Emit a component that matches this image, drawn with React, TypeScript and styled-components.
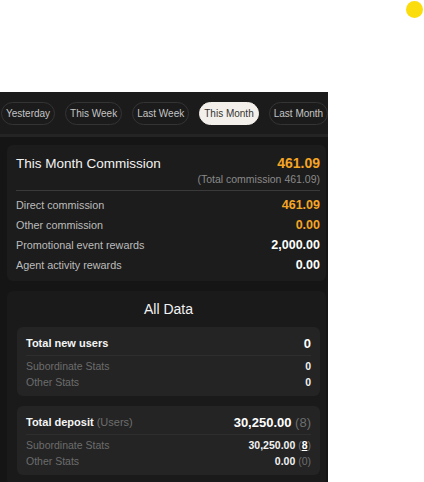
import React from "react";
import styled, { createGlobalStyle } from "styled-components";

const GlobalStyle = createGlobalStyle`
  html, body {
    margin: 0;
    padding: 0;
    background: #ffffff;
    font-family: "Liberation Sans", Arial, sans-serif;
  }
`;

const tabs = ["Yesterday", "This Week", "Last Week", "This Month", "Last Month"];

const commissionRows = [
  { label: "Direct commission", value: "461.09", accent: true },
  { label: "Other commission", value: "0.00", accent: true },
  { label: "Promotional event rewards", value: "2,000.00", accent: false },
  { label: "Agent activity rewards", value: "0.00", accent: false },
];

export default function App() {
  const [active, setActive] = React.useState("This Month");

  return (
    <Page>
      <GlobalStyle />
      <Dot />
      <Panel>
        <TabBar>
          {tabs.map((tab) => (
            <Tab key={tab} $active={tab === active} onClick={() => setActive(tab)}>
              {tab}
            </Tab>
          ))}
        </TabBar>
        <Content>
          <Card>
            <Head>
              <Title>This Month Commission</Title>
              <HeadRight>
                <BigValue>461.09</BigValue>
                <Note>(Total commission 461.09)</Note>
              </HeadRight>
            </Head>
            <Rows>
              {commissionRows.map((row) => (
                <Row key={row.label}>
                  <Label>{row.label}</Label>
                  <Value $accent={row.accent}>{row.value}</Value>
                </Row>
              ))}
            </Rows>
          </Card>
          <DataCard>
            <DataTitle>All Data</DataTitle>
            <SubCard>
              <SubHead>
                <SubTitle>Total new users</SubTitle>
                <SubValue>0</SubValue>
              </SubHead>
              <StatRow>
                <StatLabel>Subordinate Stats</StatLabel>
                <StatValue>0</StatValue>
              </StatRow>
              <StatRow>
                <StatLabel>Other Stats</StatLabel>
                <StatValue>0</StatValue>
              </StatRow>
            </SubCard>
            <SubCard>
              <SubHead>
                <SubTitle>
                  Total deposit <Muted>(Users)</Muted>
                </SubTitle>
                <SubValue>
                  30,250.00 <Muted>(8)</Muted>
                </SubValue>
              </SubHead>
              <StatRow>
                <StatLabel>Subordinate Stats</StatLabel>
                <StatValue>
                  30,250.00 <Muted>(</Muted><Under>8</Under><Muted>)</Muted>
                </StatValue>
              </StatRow>
              <StatRow>
                <StatLabel>Other Stats</StatLabel>
                <StatValue>
                  0.00 <Muted>(0)</Muted>
                </StatValue>
              </StatRow>
            </SubCard>
          </DataCard>
        </Content>
      </Panel>
    </Page>
  );
}

const Page = styled.div`
  position: relative;
  width: 424px;
  height: 482px;
  overflow: hidden;
  padding-top: 92px;
  box-sizing: border-box;
`;

const Dot = styled.div`
  position: absolute;
  top: 1px;
  right: 1px;
  width: 17px;
  height: 17px;
  border-radius: 50%;
  background: #fbdc0c;
`;

const Panel = styled.div`
  width: 328px;
  height: 390px;
  background: #151515;
  overflow: hidden;
`;

const TabBar = styled.div`
  display: flex;
  gap: 10px;
  height: 45px;
  align-items: center;
  padding: 1px 0 1px 1px;
  background: #1b1b1b;
  border-bottom: 3px solid #242424;
  box-sizing: border-box;
  white-space: nowrap;
`;

const Tab = styled.div<{ $active: boolean }>`
  flex-shrink: 0;
  height: 23px;
  line-height: 21px;
  padding: 0 4px;
  border-radius: 12px;
  font-size: 10px;
  border: 1px solid ${(p) => (p.$active ? "#f3efea" : "#343434")};
  background: ${(p) => (p.$active ? "#f3efea" : "transparent")};
  color: ${(p) => (p.$active ? "#333" : "#c4c4c4")};
  box-sizing: border-box;
`;

const Content = styled.div`
  display: flex;
  flex-direction: column;
  gap: 10px;
  padding: 8px 2px 0 7px;
`;

const Card = styled.div`
  background: #1c1c1c;
  border-radius: 6px;
  padding: 10px 6px 7px 9px;
`;

const Head = styled.div`
  display: flex;
  justify-content: space-between;
  align-items: flex-start;
  padding-bottom: 5px;
  border-bottom: 1px solid #3a3a3a;
`;

const Title = styled.div`
  font-size: 13.5px;
  color: #f2f2f2;
  padding-top: 1px;
`;

const HeadRight = styled.div`
  display: flex;
  flex-direction: column;
  align-items: flex-end;
  gap: 2px;
`;

const BigValue = styled.div`
  font-size: 14px;
  font-weight: 700;
  color: #f5a524;
`;

const Note = styled.div`
  font-size: 10.5px;
  color: #8a8a8a;
`;

const Rows = styled.div`
  display: flex;
  flex-direction: column;
  gap: 3.5px;
  padding-top: 6px;
`;

const Row = styled.div`
  display: flex;
  justify-content: space-between;
  align-items: center;
  height: 16.5px;
`;

const Label = styled.div`
  font-size: 10.8px;
  color: #bdbdbd;
`;

const Value = styled.div<{ $accent: boolean }>`
  font-size: 12.5px;
  font-weight: 700;
  color: ${(p) => (p.$accent ? "#f5a524" : "#ffffff")};
`;

const DataCard = styled.div`
  background: #1a1a1a;
  border-radius: 6px;
  padding: 8px 6px 10px 10px;
  display: flex;
  flex-direction: column;
  gap: 10px;
`;

const DataTitle = styled.div`
  text-align: center;
  font-size: 14px;
  color: #f2f2f2;
  padding-top: 2px;
`;

const SubCard = styled.div`
  background: #242424;
  border-radius: 6px;
  padding: 9px 9px 5px 9px;
`;

const SubHead = styled.div`
  display: flex;
  justify-content: space-between;
  align-items: center;
  padding-bottom: 4px;
  margin-bottom: 2px;
  border-bottom: 1px solid #2e2e2e;
`;

const SubTitle = styled.div`
  font-size: 11px;
  font-weight: 700;
  color: #f5f5f5;
`;

const SubValue = styled.div`
  font-size: 13px;
  font-weight: 700;
  color: #ffffff;
`;

const Muted = styled.span`
  font-weight: 400;
  color: #6e6e6e;
`;

const Under = styled.span`
  color: #ffffff;
  font-weight: 700;
  text-decoration: underline;
`;

const StatRow = styled.div`
  display: flex;
  justify-content: space-between;
  align-items: center;
  height: 16.5px;
`;

const StatLabel = styled.div`
  font-size: 10.5px;
  color: #6c6c6c;
`;

const StatValue = styled.div`
  font-size: 10.5px;
  font-weight: 700;
  color: #f2f2f2;
`;
